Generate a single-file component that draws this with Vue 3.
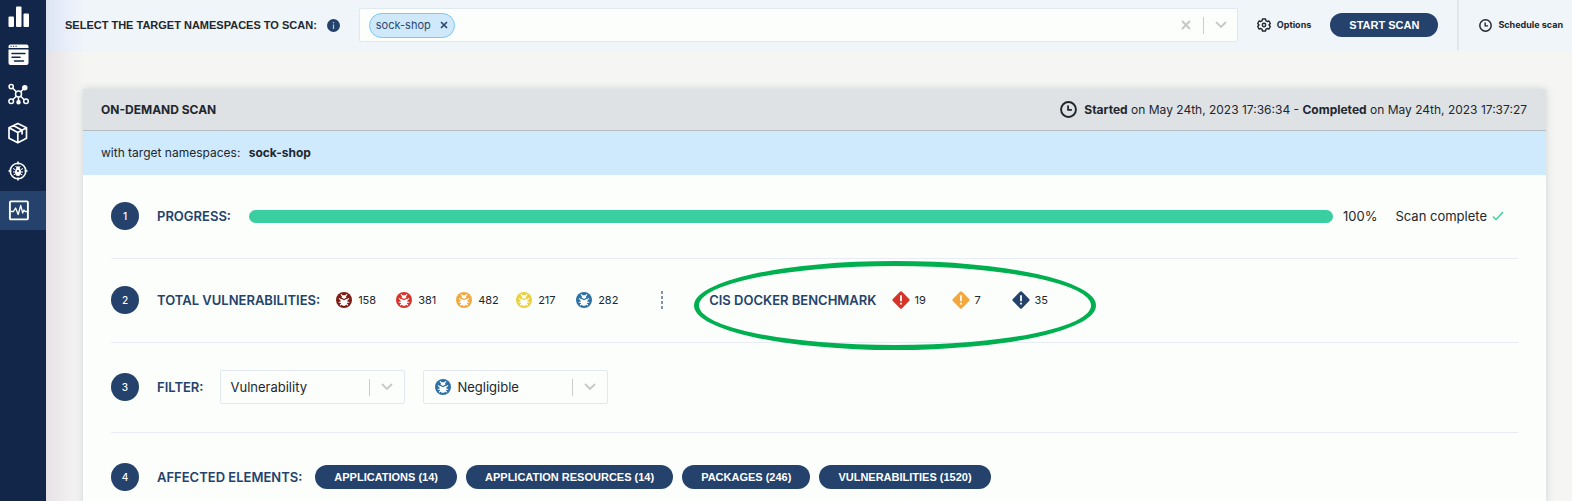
<script setup>
import { ref } from 'vue'

const navItems = ['Dashboard', 'Applications', 'Network', 'Packages', 'Vulnerabilities', 'Runtime scan']
const namespaces = ref(['sock-shop'])
const query = ref('')
const filterType = ref('Vulnerability')
const severity = ref('Negligible')

const vulnerabilities = [
  { level: 'critical', count: 158 },
  { level: 'high', count: 381 },
  { level: 'medium', count: 482 },
  { level: 'low', count: 217 },
  { level: 'negligible', count: 282 }
]
const benchmark = [
  { level: 'fatal', count: 19 },
  { level: 'warn', count: 7 },
  { level: 'info', count: 35 }
]
const elements = ['Applications (14)', 'Application resources (14)', 'Packages (246)', 'Vulnerabilities (1520)']

function removeNamespace(name) {
  namespaces.value = namespaces.value.filter((n) => n !== name)
}
</script>

<template>
  <div class="app">
    <svg class="defs" aria-hidden="true">
      <symbol id="bug" viewBox="0 0 16 16">
        <circle cx="8" cy="8" r="8" fill="currentColor" />
        <path d="M5.200 2.600 6.600 4M10.800 2.600 9.400 4M5 8.200 3.300 6.600M11 8.200l1.700-1.600M4.900 10.300H3.200M11.100 10.300h1.700M5.400 12l-1 1M10.600 12l1 1" stroke="#fff" stroke-width="1.100" stroke-linecap="round" />
        <path d="M5.600 5.400C5.600 3.800 6.700 3.200 8 3.200s2.400.6 2.400 2.200L8 7z" fill="#fff" />
        <path d="M4.900 6.700 8 8.300l3.100-1.600c.9 4-.4 7.100-3.100 7.100s-4-3.100-3.100-7.100z" fill="#fff" />
      </symbol>
      <symbol id="clock" viewBox="0 0 16 16">
        <circle cx="8" cy="8" r="7" fill="none" stroke="currentColor" stroke-width="1.800" />
        <path d="M7.600 4.200V8.400H11.200" fill="none" stroke="currentColor" stroke-width="1.700" />
      </symbol>
      <symbol id="chevron" viewBox="0 0 12 8">
        <path d="M1.500 1.500 6 6l4.500-4.500" fill="none" stroke="currentColor" stroke-width="1.800" stroke-linecap="round" />
      </symbol>
    </svg>

    <nav class="sidebar" aria-label="Main">
      <a v-for="(item, i) in navItems" :key="item" href="#" class="nav-item" :class="{ active: i === 5 }" :aria-label="item">
        <svg viewBox="0 0 22 22" fill="none" stroke="#fff">
          <g v-if="i === 0" fill="#fff" stroke="none">
            <rect x="0.500" y="11.500" width="5.500" height="10.500" rx="1" />
            <rect x="8" y="1.500" width="5.500" height="20.500" rx="1" />
            <rect x="15.500" y="8.500" width="5.500" height="13.500" rx="1" />
          </g>
          <g v-else-if="i === 1">
            <path d="M2.500.5h16a2 2 0 0 1 2 2V4H.5V2.500a2 2 0 0 1 2-2zM.5 5.500h20V19a2 2 0 0 1-2 2h-16a2 2 0 0 1-2-2z" fill="#fff" stroke="none" />
            <path d="M2.500 2.300h1.200M5 2.300h1.200M7.500 2.300h1.200" stroke="#12264a" stroke-width="1" />
            <path d="M4 9.500h13M4 13.200h8M6.500 17h9" stroke="#12264a" stroke-width="1.500" stroke-linecap="round" />
          </g>
          <g v-else-if="i === 2" stroke-width="1.500">
            <circle cx="10.500" cy="11" r="3" />
            <path d="m4.800 5.200 3.500 3.600M12.700 8.800l3.500-3.400M8.300 13.200l-3.600 3.600M12.700 13.200l3.500 3.600M10.500 14v5" />
            <circle cx="3.200" cy="3.600" r="2.100" />
            <circle cx="16.800" cy="4.800" r="2" fill="#fff" />
            <circle cx="3.200" cy="18.300" r="2.300" />
            <circle cx="10.500" cy="19.300" r="1.500" fill="#fff" />
            <circle cx="18" cy="18.300" r="2.300" />
          </g>
          <g v-else-if="i === 3" stroke-width="1.700" stroke-linejoin="round">
            <path d="m9.800 1.500 8.700 4.200v10.600L9.800 20.800 1 16.300V5.700zM1 5.700l8.800 4.700 8.700-4.700M9.800 10.400v10.400M5.400 3.600l8.700 4.600v4.300" />
          </g>
          <g v-else-if="i === 4" stroke-width="1.600">
            <circle cx="10" cy="10" r="7.800" />
            <path d="M10 .5v3M10 16.500v3M.5 10h3M16.500 10h3" />
            <path d="M7.600 5 8.600 6.500M12.400 5l-1 1.500M7 8.500l-2-1M13 8.500l2-1M7 11H5M13 11h2M7.300 13l-1.600 1M12.700 13l1.600 1" stroke-width="1" />
            <ellipse cx="10" cy="11" rx="3" ry="4" fill="#fff" stroke="none" />
            <circle cx="10" cy="7.100" r="1.900" fill="#fff" stroke="none" />
            <circle cx="10" cy="10" r="1" fill="#12264a" stroke="none" />
          </g>
          <g v-else stroke-width="1.900">
            <rect x="1.900" y="1.400" width="18" height="18" rx="1" />
            <path d="M2.500 11.500h3L7.600 8l2.600 6.500L12.700 5.500l2 7.500 1.300-3 1 1.500h2.500" stroke-width="1.300" stroke-linejoin="round" />
          </g>
        </svg>
      </a>
    </nav>

    <div class="page">
      <header class="topbar">
        <div class="scan-form">
          <label class="scan-label" for="namespaces">SELECT THE TARGET NAMESPACES TO SCAN:</label>
          <svg class="hint" viewBox="0 0 13 13" aria-hidden="true">
            <circle cx="6.500" cy="6.500" r="6.500" fill="#24426c" />
            <path d="M6.500 3v1.200M6.500 5.400V10" stroke="#b9cbe4" stroke-width="1.200" />
          </svg>
          <div class="multi">
            <span v-for="name in namespaces" :key="name" class="chip">
              {{ name }}
              <button type="button" class="chip-remove" :aria-label="`Remove ${name}`" @click="removeNamespace(name)">
                <svg viewBox="0 0 8 8"><path d="m1 1 6 6M7 1 1 7" stroke="currentColor" stroke-width="1.700" /></svg>
              </button>
            </span>
            <input id="namespaces" v-model="query" class="multi-input" type="text" />
            <button type="button" class="clear" aria-label="Clear" @click="namespaces = []">
              <svg viewBox="0 0 10 10"><path d="m1 1 8 8M9 1 1 9" stroke="currentColor" stroke-width="2" /></svg>
            </button>
            <span class="bar"></span>
            <svg class="chev"><use href="#chevron" /></svg>
          </div>
          <button type="button" class="text-button">
            <svg class="gear" viewBox="0 0 14 14" fill="none" stroke="currentColor" stroke-width="1.400" stroke-linejoin="round">
              <path d="M5.500 1h3l.5 1.800 1.200.7 1.800-.5 1.300 2.500L12 7l1.300 1.500L12 11l-1.800-.5-1.200.7-.5 1.800h-3L5 11.200l-1.200-.7L2 11 .7 8.500 2 7 .7 5.500 2 3l1.800.5L5 2.800z" />
              <circle cx="7" cy="7" r="1.700" />
            </svg>
            Options
          </button>
          <button type="button" class="pill start">START SCAN</button>
        </div>
        <button type="button" class="text-button schedule">
          <svg class="small-clock"><use href="#clock" /></svg>
          Schedule scan
        </button>
      </header>

      <main class="card">
        <div class="card-head">
          <h1>ON-DEMAND SCAN</h1>
          <div class="times">
            <svg class="big-clock"><use href="#clock" /></svg>
            <span><b>Started</b> on May 24th, 2023 17:36:34 - <b>Completed</b> on May 24th, 2023 17:37:27</span>
          </div>
        </div>
        <div class="targets">with target namespaces: <b>sock-shop</b></div>

        <div class="steps">
          <section class="step">
            <span class="num">1</span>
            <h2>PROGRESS:</h2>
            <div class="progress" role="progressbar" aria-valuenow="100" aria-label="Scan progress"></div>
            <span class="percent">100%</span>
            <span class="status">Scan complete</span>
            <svg class="check" viewBox="0 0 12 10"><path d="m1 5.500 3 3 7-7.500" fill="none" stroke="currentColor" stroke-width="1.400" /></svg>
          </section>

          <section class="step">
            <span class="num">2</span>
            <h2>TOTAL VULNERABILITIES:</h2>
            <ul class="counts">
              <li v-for="v in vulnerabilities" :key="v.level">
                <svg class="bug" :class="v.level"><use href="#bug" /></svg>{{ v.count }}
              </li>
            </ul>
            <span class="dashes"></span>
            <div class="benchmark">
              <h2>CIS DOCKER BENCHMARK</h2>
              <ul class="counts tight">
                <li v-for="b in benchmark" :key="b.level">
                  <svg class="diamond" :class="b.level" viewBox="0 0 18 18">
                    <rect x="2.500" y="2.500" width="13" height="13" rx="1.500" transform="rotate(45 9 9)" fill="currentColor" />
                    <path d="M9 4.200v6M9 11.800v1.800" stroke="#fff" stroke-width="1.800" />
                  </svg>{{ b.count }}
                </li>
              </ul>
              <span class="highlight"></span>
            </div>
          </section>

          <section class="step filter">
            <span class="num">3</span>
            <h2>FILTER:</h2>
            <div class="selects">
              <div class="select">
                <select v-model="filterType" aria-label="Filter by">
                  <option>Vulnerability</option>
                  <option>CIS Docker benchmark</option>
                </select>
                <span class="bar"></span>
                <svg class="chev"><use href="#chevron" /></svg>
              </div>
              <div class="select">
                <svg class="bug negligible"><use href="#bug" /></svg>
                <select v-model="severity" aria-label="Severity">
                  <option>Negligible</option>
                  <option>Low</option>
                  <option>Medium</option>
                  <option>High</option>
                  <option>Critical</option>
                </select>
                <span class="bar"></span>
                <svg class="chev"><use href="#chevron" /></svg>
              </div>
            </div>
          </section>

          <section class="step affected">
            <span class="num">4</span>
            <h2>AFFECTED ELEMENTS:</h2>
            <div class="pills">
              <button v-for="e in elements" :key="e" type="button" class="pill">{{ e }}</button>
            </div>
          </section>
        </div>
      </main>
    </div>
  </div>
</template>

<style>
body {
  overflow: hidden;
}
</style>

<style scoped>
.app {
  display: flex;
  min-height: 100vh;
  background: #f5f6f4;
  color: #22272e;
  font-family: Inter, "Liberation Sans", sans-serif;
  font-size: 12px;
  line-height: 16px;
}
.app *,
.app {
  box-sizing: border-box;
}
.defs {
  position: absolute;
  width: 0;
  height: 0;
}
svg {
  display: block;
  flex: none;
}
button {
  border: 0;
  padding: 0;
  background: none;
  color: inherit;
  font: inherit;
  cursor: pointer;
}
h1,
h2 {
  margin: 0;
  font-weight: 700;
  white-space: nowrap;
}

.sidebar {
  flex: none;
  width: 46px;
  margin-top: -4px;
  background: #12264a;
}
.nav-item {
  display: flex;
  align-items: center;
  height: 39px;
  padding-left: 8px;
}
.nav-item svg {
  width: 22px;
  height: 22px;
}
.nav-item.active {
  background: #24426b;
}

.page {
  flex: 1;
  min-width: 0;
  background: linear-gradient(90deg, #e6e2e6, #efecee 18px, #f5f6f4 38px);
}
.topbar {
  display: flex;
  height: 52px;
  background: linear-gradient(90deg, #dde4f1, #e8effb 20px, #f0f5f9 40px);
}
.scan-form {
  flex: 1;
  display: flex;
  align-items: center;
  padding: 0 19px;
  height: 50px;
  border-right: 2px solid #e2e6ec;
}
.scan-label {
  font-family: "Liberation Sans", Arial, sans-serif;
  font-size: 11px;
  font-weight: 700;
  white-space: nowrap;
}
.hint {
  width: 13px;
  height: 13px;
  margin: 0 19px 0 10px;
}
.multi {
  flex: 1;
  display: flex;
  align-items: center;
  height: 34px;
  padding: 0 10px 0 9px;
  border: 1px solid #e0e8f0;
  border-radius: 2px;
  background: #fcfefb;
}
.chip {
  display: flex;
  align-items: center;
  gap: 9px;
  height: 25px;
  padding: 0 6px;
  border: 1px solid #79c8f7;
  border-radius: 13px;
  background: #cfe9fb;
  color: #2c4672;
  font-size: 11px;
}
.chip-remove svg {
  width: 8px;
  height: 8px;
}
.multi-input {
  flex: 1;
  min-width: 0;
  margin-left: 6px;
  border: 0;
  outline: 0;
  background: none;
  font: inherit;
}
.clear {
  color: #c6c8c8;
}
.clear svg {
  width: 10px;
  height: 10px;
}
.bar {
  width: 1px;
  height: 17px;
  margin: 0 11px 0 12px;
  background: #ccc;
}
.chev {
  width: 12px;
  height: 8px;
  color: #c6c8c8;
}
.text-button {
  display: flex;
  align-items: center;
  gap: 6px;
  font-size: 9px;
  font-weight: 700;
  white-space: nowrap;
}
.gear {
  width: 14px;
  height: 14px;
}
.scan-form .text-button {
  margin: 0 19px;
}
.schedule {
  height: 50px;
  padding: 0 9px 0 20px;
}
.small-clock {
  width: 13px;
  height: 13px;
}
.pill {
  height: 24px;
  padding: 0 19px;
  border-radius: 12px;
  background: #24426c;
  color: #fff;
  font-family: "Liberation Sans", Arial, sans-serif;
  font-size: 11px;
  font-weight: 700;
  text-transform: uppercase;
  white-space: nowrap;
}

.card {
  margin: 37px 26px 0 37px;
  min-height: 412px;
  background: #fcfefb;
  box-shadow: 0 0 8px #cfd2d4;
}
.card-head {
  display: flex;
  align-items: center;
  justify-content: space-between;
  height: 42px;
  padding: 0 19px 0 18px;
  border-bottom: 1px solid #b5bcc3;
  background: #dee2e5;
}
.card-head h1 {
  font-size: 12px;
}
.times {
  display: flex;
  align-items: center;
  gap: 7px;
}
.big-clock {
  width: 17px;
  height: 17px;
}
.targets {
  height: 44px;
  padding: 0 18px;
  background: #ceeafc;
  line-height: 44px;
}
.targets b {
  margin-left: 5px;
}
.steps {
  padding: 0 28px;
}
.step {
  display: flex;
  align-items: center;
  height: 84px;
  padding-bottom: 1px;
  border-bottom: 1px solid #e8ebf3;
}
.step.filter {
  height: 90px;
}
.step.affected {
  height: 88px;
  border: 0;
}
.num {
  flex: none;
  width: 28px;
  margin-right: 18px;
  border-radius: 50%;
  background: #24426c;
  color: #fff;
  font-size: 10px;
  font-weight: 500;
  line-height: 28px;
  text-align: center;
}
.step h2 {
  color: #24426c;
  font-size: 13px;
  font-weight: 600;
}
.progress {
  flex: 1;
  height: 13px;
  margin: 0 10px 0 18px;
  border-radius: 7px;
  background: #3bcea0;
}
.percent,
.status {
  font-size: 13px;
}
.status {
  margin: 0 5px 0 18px;
}
.check {
  width: 12px;
  height: 10px;
  margin-right: 14px;
  color: #3bcea0;
}
.counts {
  display: flex;
  margin: 0 0 0 16px;
  padding: 0;
  list-style: none;
  font-size: 11px;
}
.counts li {
  display: flex;
  align-items: center;
  gap: 6px;
  width: 60px;
}
.counts.tight li {
  gap: 4px;
}
.bug {
  width: 16px;
  height: 16px;
}
.diamond {
  width: 18px;
  height: 18px;
}
.critical {
  color: #7c1c14;
}
.high,
.fatal {
  color: #d63429;
}
.medium,
.warn {
  color: #f3a73c;
}
.low {
  color: #ebd13d;
}
.negligible {
  color: #2b71a3;
}
.info {
  color: #24426c;
}
.dashes {
  width: 2px;
  height: 19px;
  margin: 0 46px 0 25px;
  background: repeating-linear-gradient(#8390b0 0 3px, transparent 3px 5px);
}
.benchmark {
  position: relative;
  display: flex;
  align-items: center;
}
.highlight {
  position: absolute;
  top: -30px;
  left: -15px;
  right: -24px;
  height: 89px;
  border: 5px solid #00b050;
  border-radius: 50%;
  pointer-events: none;
}
.selects {
  display: flex;
  gap: 18px;
  margin-left: 17px;
}
.select {
  display: flex;
  align-items: center;
  width: 185px;
  height: 34px;
  padding: 0 11px 0 9px;
  border: 1px solid #e3e7f0;
  border-radius: 2px;
}
.select select {
  flex: 1;
  min-width: 0;
  padding: 0;
  border: 0;
  outline: 0;
  appearance: none;
  background: none;
  color: inherit;
  font: inherit;
  font-size: 13px;
}
.select .bug {
  margin: 0 6px 0 2px;
}
.pills {
  display: flex;
  gap: 9px;
  margin-left: 13px;
}
</style>
